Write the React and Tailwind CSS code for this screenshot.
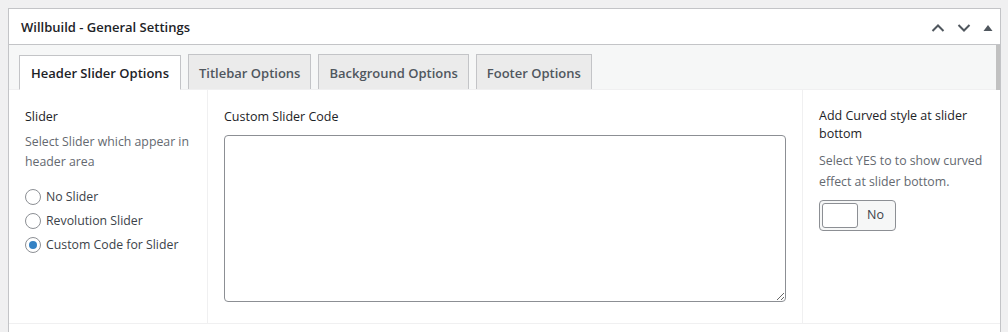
import { useState } from "react";

const tabs = ["Header Slider Options", "Titlebar Options", "Background Options", "Footer Options"];
const sliders = ["No Slider", "Revolution Slider", "Custom Code for Slider"];

function Radio({ checked }) {
  return (
    <span className="w-4 h-4 rounded-full border border-[#8c8f94] bg-white flex items-center justify-center shrink-0">
      {checked && <span className="w-2 h-2 rounded-full bg-[#3582c4]" />}
    </span>
  );
}

export default function App() {
  const [active] = useState(0);
  const [slider, setSlider] = useState(2);

  return (
    <div
      className="w-[1008px] h-[332px] bg-[#f0f0f1] pt-2 pl-2 overflow-hidden"
      style={{ fontFamily: '"Segoe UI", "Open Sans", sans-serif' }}
    >
      <div className="w-[993px] h-[332px] bg-white border border-[#c3c4c7] border-b-0 flex flex-col">
        {/* header */}
        <div className="h-[36px] flex items-center justify-between pl-3 pr-[7px] pt-[2px] border-b border-[#c3c4c7]">
          <h2 className="text-[13px] font-semibold text-[#1d2327]">Willbuild - General Settings</h2>
          <div className="flex items-center gap-[12px] text-[#50575e]">
            <svg width="14" height="10" viewBox="0 0 14 10" fill="none" stroke="currentColor" strokeWidth="2">
              <path d="M1.5 8l5.5-5.5 5.5 5.5" />
            </svg>
            <svg width="14" height="10" viewBox="0 0 14 10" fill="none" stroke="currentColor" strokeWidth="2">
              <path d="M1.5 2l5.5 5.5 5.5-5.5" />
            </svg>
            <svg width="10" height="10" viewBox="0 0 10 10" fill="currentColor">
              <path d="M5 2l4.5 6h-9z" />
            </svg>
          </div>
        </div>

        {/* tabs */}
        <div className="flex h-[45px]">
          <div className="flex-1 bg-[#f6f7f7] flex items-end gap-[7px] pl-[10px] border-b border-[#f0f0f1]">
            {tabs.map((t, i) => (
              <div
                key={t}
                className={
                  i === active
                    ? "h-[35px] px-[11px] pt-[3px] flex items-center bg-white border border-[#c3c4c7] border-b-white -mb-px text-[13px] font-semibold text-[#1d2327]"
                    : "h-[35px] px-[10px] pt-[3px] flex items-center bg-[#ebebeb] border border-[#c3c4c7] border-b-0 text-[13px] font-semibold text-[#50575e]"
                }
              >
                {t}
              </div>
            ))}
          </div>
          <div className="w-[4px] bg-[#c1c1c1]" />
        </div>

        {/* content */}
        <div className="flex h-[234px] border-b border-[#f0f0f1]">
          <div className="w-[199px] border-r border-[#f0f0f1] pl-4 pr-2 pt-[17px]">
            <div className="text-[12.5px] font-medium text-[#1d2327] leading-[20px]">Slider</div>
            <p className="text-[12.3px] text-[#646970] leading-[20px] mt-[5px]">
              Select Slider which appear in header area
            </p>
            <div className="mt-[17px] flex flex-col gap-[8px]">
              {sliders.map((s, i) => (
                <label key={s} onClick={() => setSlider(i)} className="flex items-center gap-[5px] h-4 text-[12.3px] text-[#3c434a] cursor-pointer">
                  <Radio checked={slider === i} />
                  {s}
                </label>
              ))}
            </div>
          </div>

          <div className="w-[595px] border-r border-[#f0f0f1] pl-4 pr-4 pt-[17px]">
            <div className="text-[12.5px] font-medium text-[#1d2327] leading-[20px]">Custom Slider Code</div>
            <textarea className="mt-[8px] w-[562px] h-[167px] border border-[#8c8f94] rounded-[4px] resize-y outline-none" />
          </div>

          <div className="flex-1 pl-4 pr-2 pt-[17px]">
            <div className="text-[12.5px] font-medium text-[#1d2327] leading-[18px]">
              Add Curved style at slider bottom
            </div>
            <p className="text-[12.3px] text-[#646970] leading-[21px] mt-[7px]">
              Select YES to to show curved effect at slider bottom.
            </p>
            <div className="mt-[8px] w-[77px] h-[31px] border border-[#8c8f94] rounded-[4px] flex items-center p-[2px] bg-[#f6f7f7]">
              <span className="w-[36px] h-full bg-white border border-[#8c8f94] rounded-[3px]" />
              <span className="flex-1 text-center text-[12.5px] text-[#3c434a]">No</span>
            </div>
          </div>
        </div>
      </div>
    </div>
  );
}
